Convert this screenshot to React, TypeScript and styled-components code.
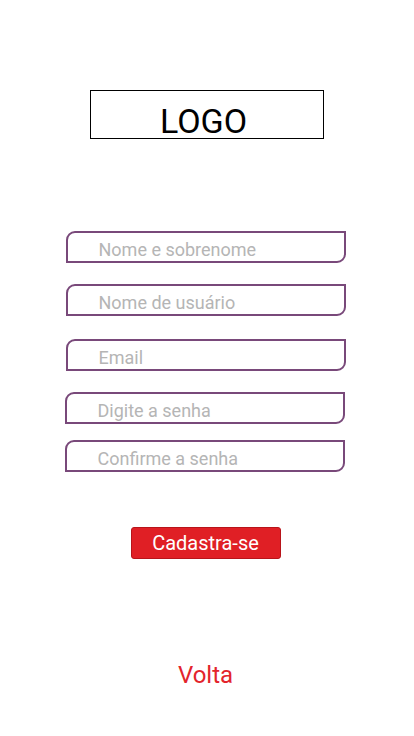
import React from "react";
import styled, { createGlobalStyle } from "styled-components";

const Global = createGlobalStyle`
  html, body { margin: 0; padding: 0; background: #ffffff; }
  body { font-family: Roboto, "Liberation Sans", Arial, sans-serif; }
  * { box-sizing: border-box; }
`;

const Page = styled.div`
  width: 414px;
  height: 736px;
  display: flex;
  flex-direction: column;
  align-items: center;
  padding-top: 90px;
  padding-right: 3px;
`;

const LogoBox = styled.div`
  width: 234px;
  height: 49px;
  margin-left: 2px;
  border: 1px solid #000000;
  display: flex;
  justify-content: center;
  align-items: flex-end;
  font-size: 34px;
  line-height: 33px;
  color: #000000;
  padding-right: 6px;
`;

const Form = styled.form`
  width: 280px;
  margin-top: 92px;
  display: flex;
  flex-direction: column;
`;

const Field = styled.input<{ $top: number; $left: number }>`
  width: 280px;
  height: 32px;
  margin-top: ${(p) => p.$top}px;
  margin-left: ${(p) => p.$left}px;
  border: 2px solid #79497a;
  border-radius: 9px 0 9px 0;
  padding: 4px 0 0 31px;
  font-family: Roboto, "Liberation Sans", Arial, sans-serif;
  font-size: 18px;
  color: #333333;
  background: #ffffff;
  outline: none;
  &::placeholder { color: #b5b5b5; }
`;

const Submit = styled.button`
  margin-top: 55px;
  width: 150px;
  height: 32px;
  background: #e01f25;
  border: 1px solid #b8141a;
  border-radius: 3px;
  color: #ffffff;
  font-family: Roboto, "Liberation Sans", Arial, sans-serif;
  font-size: 20px;
  line-height: 1;
  padding: 0 0 1px 0;
  cursor: pointer;
`;

const Back = styled.a`
  margin-top: 102px;
  color: #e3242b;
  font-size: 24px;
  text-decoration: none;
  cursor: pointer;
`;

const fields = [
  { ph: "Nome e sobrenome", top: 0, left: 0, type: "text" },
  { ph: "Nome de usuário", top: 21, left: 0, type: "text" },
  { ph: "Email", top: 23, left: 0, type: "email" },
  { ph: "Digite a senha", top: 21, left: -1, type: "password" },
  { ph: "Confirme a senha", top: 16, left: -1, type: "password" },
];

export default function App() {
  return (
    <>
      <Global />
      <Page>
        <LogoBox>LOGO</LogoBox>
        <Form onSubmit={(e) => e.preventDefault()}>
          {fields.map((f) => (
            <Field key={f.ph} placeholder={f.ph} type={f.type} $top={f.top} $left={f.left} />
          ))}
        </Form>
        <Submit type="button">Cadastra-se</Submit>
        <Back>Volta</Back>
      </Page>
    </>
  );
}
